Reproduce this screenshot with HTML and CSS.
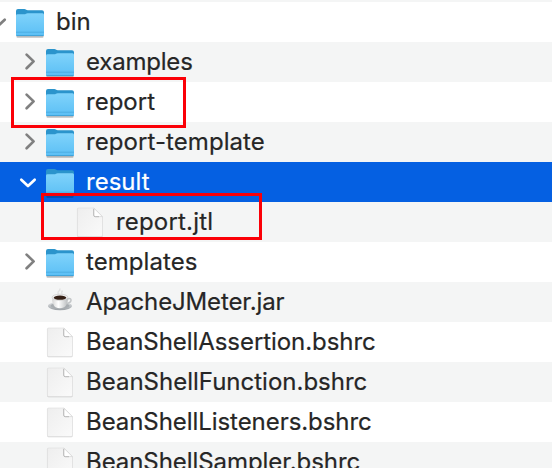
FILE: index.html
```
<!DOCTYPE html>
<html lang="en">
<head>
<meta charset="utf-8">
<title>bin</title>
<link rel="stylesheet" href="styles.css">
</head>
<body>
<svg class="defs" width="0" height="0" aria-hidden="true">
  <defs>
    <linearGradient id="front" x1="0" y1="0" x2="0" y2="1"><stop offset="0" stop-color="#80d3fb"/><stop offset="1" stop-color="#5bbff5"/></linearGradient>
    <linearGradient id="paper" x1="0" y1="0" x2="1" y2="1"><stop offset="0" stop-color="#eeeeee"/><stop offset="1" stop-color="#fafafa"/></linearGradient>
    <linearGradient id="cup" x1="0" y1="0" x2="1" y2="0"><stop offset="0" stop-color="#d4d4d4"/><stop offset=".4" stop-color="#ffffff"/><stop offset="1" stop-color="#b9bcbe"/></linearGradient>
    <linearGradient id="saucer" x1="0" y1="0" x2="0" y2="1"><stop offset="0" stop-color="#e4e6e8"/><stop offset="1" stop-color="#9a9fa4"/></linearGradient>
    <symbol id="folder" viewBox="0 0 30 40">
      <path d="M1.500 33.500h27v1.500q0 .8-1 .8h-25q-1 0-1-.8z" fill="#000" opacity=".25"/>
      <path d="M1 9Q1 7 3 7h6.300c1.600 0 2.200 1.300 3.500 1.300H27q2 0 2 2V20H1z" fill="#2b94cc"/>
      <path d="M1 13.700q0-1.400 1.500-1.400h6.700c1.500 0 2-1.100 3.500-1.100h14.800q1.500 0 1.500 1.500v20.200q0 1.200-1.200 1.200H2.200Q1 34.100 1 32.900z" fill="url(#front)"/>
      <path d="M1 30.200h28" fill="none" stroke="#46a8de" stroke-width=".8"/>
      <path d="M1.500 33.600h27" fill="none" stroke="#3799cf" stroke-width=".8"/>
    </symbol>
    <symbol id="file" viewBox="0 0 30 40">
      <path d="M2.300 7.600q0-1.300 1.300-1.300h15.700l8.300 8.600v19q0 1.300-1.300 1.300H3.600q-1.300 0-1.300-1.300z" fill="#000" opacity=".18"/>
      <path d="M2.400 7.300Q2.400 6 3.700 6H19l8.500 8.700v18.500q0 1.300-1.300 1.300H3.700q-1.300 0-1.300-1.300z" fill="url(#paper)" stroke="#dedede" stroke-width=".6"/>
      <path d="M18.800 6.200v6.800q0 1.600 1.600 1.600h7z" fill="#fff" stroke="#c6c6c6" stroke-width=".5"/>
      <path d="M18.700 7v6.200q0 1.500 1.500 1.500H24" fill="none" stroke="#a8a8a8" stroke-width=".7"/>
    </symbol>
    <symbol id="coffee" viewBox="0 0 30 40">
      <path d="M14 12.500q-2-2 0-3.500 1.500-1 .7-2.500M17 12.500q-1-2 .5-4" fill="none" stroke="#aaa" stroke-width="1.400" opacity=".25"/>
      <ellipse cx="15" cy="24" rx="12" ry="4.200" fill="url(#saucer)"/>
      <ellipse cx="15" cy="23.800" rx="9.500" ry="2.800" fill="#a7acb0"/>
      <path d="M22 17.200q4.500-1.700 4 1.300-.5 2.600-5.500 3.200" fill="none" stroke="#c3c6c8" stroke-width="1.500"/>
      <path d="M7 15.500q0 7 3.500 9.800 4.400 2.100 8.700 0Q23 22.500 23 15.500z" fill="url(#cup)"/>
      <ellipse cx="15" cy="15.300" rx="8" ry="3.100" fill="#f2f2f2" stroke="#bdbdbd" stroke-width=".5"/>
      <ellipse cx="15" cy="15.700" rx="6.300" ry="2.100" fill="#352016"/>
    </symbol>
    <symbol id="right" viewBox="0 0 20 40"><path d="M8.600 12.600l7 6.800-7 6.800" fill="none" stroke="currentColor" stroke-width="2.700" stroke-linecap="round" stroke-linejoin="round"/></symbol>
    <symbol id="down" viewBox="0 0 20 40"><path d="M3.300 17.700L10 24l6.700-6.300" fill="none" stroke="currentColor" stroke-width="2.700" stroke-linecap="round" stroke-linejoin="round"/></symbol>
  </defs>
</svg>
<main class="tree">
  <div class="row root"><svg class="arrow"><use href="#down"/></svg><svg class="icon"><use href="#folder"/></svg><span class="name">bin</span></div>
  <div class="row"><svg class="arrow"><use href="#right"/></svg><svg class="icon"><use href="#folder"/></svg><span class="name n-examples">examples</span></div>
  <div class="row"><svg class="arrow"><use href="#right"/></svg><svg class="icon"><use href="#folder"/></svg><span class="name">report</span></div>
  <div class="row"><svg class="arrow"><use href="#right"/></svg><svg class="icon"><use href="#folder"/></svg><span class="name n-template">report-template</span></div>
  <div class="row selected"><svg class="arrow"><use href="#down"/></svg><svg class="icon"><use href="#folder"/></svg><span class="name">result</span></div>
  <div class="row child"><svg class="arrow"></svg><svg class="icon"><use href="#file"/></svg><span class="name n-jtl">report.jtl</span></div>
  <div class="row"><svg class="arrow"><use href="#right"/></svg><svg class="icon"><use href="#folder"/></svg><span class="name n-template">templates</span></div>
  <div class="row"><svg class="arrow"></svg><svg class="icon"><use href="#coffee"/></svg><span class="name n-jar">ApacheJMeter.jar</span></div>
  <div class="row"><svg class="arrow"></svg><svg class="icon"><use href="#file"/></svg><span class="name n-shell">BeanShellAssertion.bshrc</span></div>
  <div class="row"><svg class="arrow"></svg><svg class="icon"><use href="#file"/></svg><span class="name">BeanShellFunction.bshrc</span></div>
  <div class="row"><svg class="arrow"></svg><svg class="icon"><use href="#file"/></svg><span class="name n-shell">BeanShellListeners.bshrc</span></div>
  <div class="row"><svg class="arrow"></svg><svg class="icon"><use href="#file"/></svg><span class="name n-shell">BeanShellSampler.bshrc</span></div>
  <div class="mark mark-report"></div>
  <div class="mark mark-jtl"></div>
</main>
</body>
</html>
```
FILE: styles.css
```
body {
  margin: 0;
  overflow: hidden;
  background: #fff;
  font-family: Inter, "Liberation Sans", sans-serif;
}
.defs { position: absolute; }
.tree {
  position: relative;
  box-sizing: border-box;
  height: 468px;
  padding-top: 2px;
  overflow: hidden;
  background: #f4f5f5;
}
.row {
  display: flex;
  align-items: center;
  box-sizing: border-box;
  height: 40px;
  padding-left: 18px;
  background: #fff;
  color: #262626;
}
.row:nth-child(even) { background: #f4f5f5; }
.row.root { padding-left: 0; margin-left: -12px; }
.row.child { padding-left: 48px; }
.row.selected { background: #0560e2; color: #fff; }
.arrow {
  flex: none;
  width: 20px;
  height: 40px;
  margin-right: 7px;
  color: #808080;
}
.selected .arrow { color: #fff; }
.icon { flex: none; width: 30px; height: 40px; margin-right: 11px; }
.name {
  font-size: 24px;
  line-height: 40px;
  white-space: nowrap;
  -webkit-text-stroke: .2px currentColor;
}
.n-examples { letter-spacing: -.2px; }
.n-template { letter-spacing: .07px; }
.n-jtl { letter-spacing: .18px; }
.n-jar { letter-spacing: -.14px; }
.n-shell { letter-spacing: -.06px; }
.mark {
  position: absolute;
  box-sizing: border-box;
  border: 3px solid #fb0007;
}
.mark-report { left: 11px; top: 77px; width: 175px; height: 51px; }
.mark-jtl { left: 41px; top: 193px; width: 221px; height: 47px; }
```
